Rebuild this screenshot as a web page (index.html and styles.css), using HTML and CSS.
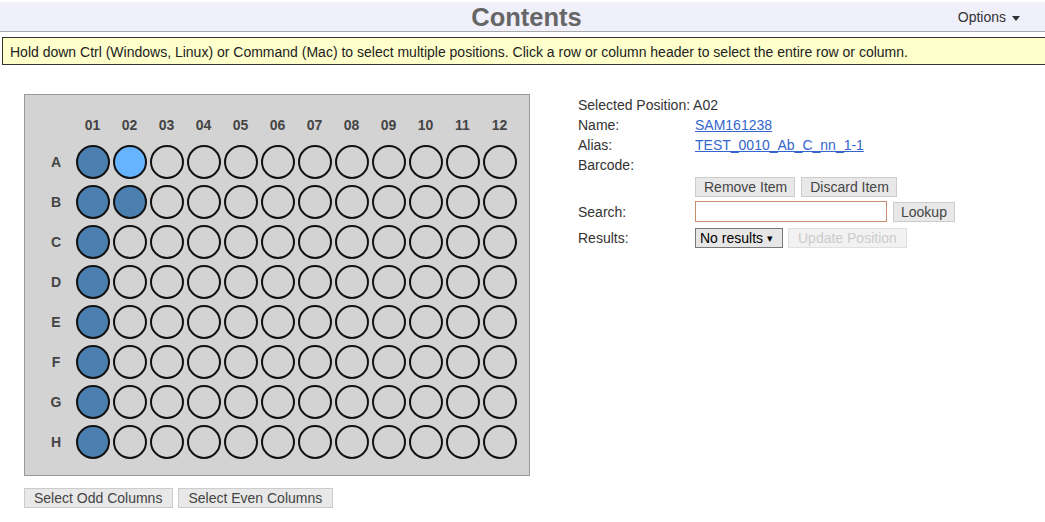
FILE: index.html
```html
<!DOCTYPE html>
<html>
<head>
<meta charset="utf-8">
<link rel="stylesheet" href="styles.css">
</head>
<body>
<div class="header">
  <h1 class="title">Contents</h1>
  <div class="options">Options <span class="caret"></span></div>
</div>
<div class="info">Hold down Ctrl (Windows, Linux) or Command (Mac) to select multiple positions. Click a row or column header to select the entire row or column.</div>
<div class="main">
  <div class="left">
    <div class="plate" id="plate"></div>
    <div class="plate-actions">
      <button class="btn btn-wide">Select Odd Columns</button>
      <button class="btn btn-wide">Select Even Columns</button>
    </div>
  </div>
  <div class="details">
    <div class="row"><span class="lbl lbl-auto">Selected Position:</span><span class="val">A02</span></div>
    <div class="row"><span class="lbl">Name:</span><a class="link" href="#">SAM161238</a></div>
    <div class="row"><span class="lbl">Alias:</span><a class="link" href="#">TEST_0010_Ab_C_nn_1-1</a></div>
    <div class="row"><span class="lbl">Barcode:</span></div>
    <div class="row btn-row"><span class="lbl"></span><button class="btn">Remove Item</button><button class="btn">Discard Item</button></div>
    <div class="row search-row"><span class="lbl">Search:</span><input class="search" type="text"><button class="btn">Lookup</button></div>
    <div class="row results-row"><span class="lbl">Results:</span><span class="select">No results <span class="sel-caret">&#9662;</span></span><button class="btn btn-disabled">Update Position</button></div>
  </div>
</div>
<script>
(function(){
  var plate = document.getElementById('plate');
  var rows = 'ABCDEFGH'.split('');
  var html = '<div class="corner"></div>';
  for (var c = 1; c <= 12; c++) html += '<div class="colhead">' + (c < 10 ? '0' + c : c) + '</div>';
  rows.forEach(function(r, ri){
    html += '<div class="rowhead">' + r + '</div>';
    for (var c = 1; c <= 12; c++) {
      var cls = 'well';
      if (c === 1 || (ri === 1 && c === 2)) cls += ' filled';
      if (ri === 0 && c === 2) cls += ' selected';
      html += '<div class="cell"><div class="' + cls + '"></div></div>';
    }
  });
  plate.innerHTML = html;
})();
</script>
</body>
</html>
```
FILE: styles.css
```css
html, body {
  margin: 0;
  padding: 0;
  background: #fff;
  font-family: "Liberation Sans", Arial, sans-serif;
  font-size: 14px;
  color: #333;
  overflow: hidden;
}
.header {
  margin-top: 2px;
  height: 29px;
  background: #f0f0fa;
  border-bottom: 1px solid #aaa;
  display: flex;
  align-items: center;
  justify-content: center;
  padding-left: 8px;
  position: relative;
}
.title {
  margin: 0;
  font-size: 25.5px;
  font-weight: bold;
  color: #666;
  line-height: 30px;
}
.options {
  position: absolute;
  right: 25px;
  top: 0;
  line-height: 31px;
  font-size: 14px;
  color: #333;
  display: flex;
  align-items: center;
}
.caret {
  display: inline-block;
  width: 0;
  height: 0;
  border-left: 4px solid transparent;
  border-right: 4px solid transparent;
  border-top: 5px solid #333;
  margin-left: 6px;
  margin-top: 1px;
}
.info {
  margin: 5px 0 0 2px;
  width: 1100px;
  height: 26px;
  line-height: 28px;
  border: 1px solid #333;
  background: #ffffcc;
  padding-left: 7px;
  color: #222;
  white-space: nowrap;
}
.main {
  display: flex;
  padding: 29px 0 0 24px;
  gap: 48px;
}
.plate {
  padding: 13px 11px 13px 13px;
  background: #d3d3d3;
  border: 1px solid #999;
  display: grid;
  width: max-content;
  grid-template-columns: 36px repeat(12, 37px);
  grid-template-rows: 34px repeat(8, 40px);
}
.colhead, .rowhead {
  display: flex;
  align-items: center;
  justify-content: center;
  font-weight: bold;
  font-size: 14px;
  color: #444;
}
.cell {
  display: flex;
  align-items: center;
  justify-content: center;
}
.well {
  width: 30px;
  height: 30px;
  border: 2px solid #111;
  border-radius: 50%;
  background: #d3d3d3;
}
.well.filled { background: #4a7fb0; }
.well.selected { background: #66b3ff; }
.plate-actions {
  display: flex;
  gap: 5px;
  margin-top: 12px;
}
.btn {
  font-family: "Liberation Sans", Arial, sans-serif;
  font-size: 14px;
  color: #444;
  background: #e8e8e8;
  border: 1px solid #ccc;
  border-radius: 0;
  height: 20px;
  padding: 0 7px;
  line-height: 18px;
  margin: 0;
}
.btn-wide { padding: 0 10px 0 9px; }
.btn-disabled {
  color: #ccc;
  background: #f2f2f2;
  border-color: #e0e0e0;
  padding: 0 9px;
}
.details {
  display: flex;
  flex-direction: column;
  padding-top: 1px;
}
.row {
  display: flex;
  align-items: center;
  height: 20px;
  white-space: nowrap;
}
.lbl {
  width: 117px;
  flex: none;
}
.lbl-auto { width: auto; margin-right: 3px; }
.link { color: #3366cc; text-decoration: underline; }
.btn-row { margin-top: 2px; gap: 6px; }
.btn-row .lbl { margin-right: -6px; }
.btn-row .btn { padding: 0 7px 0 8px; }
.search-row { margin-top: 4px; height: 21px; gap: 6px; }
.search-row .lbl { margin-right: -6px; }
.search {
  width: 192px;
  height: 21px;
  box-sizing: border-box;
  border: 1px solid #c98d6d;
  margin: 0;
  padding: 0;
}
.results-row { margin-top: 6px; gap: 5px; }
.results-row .lbl { margin-right: -5px; }
.select {
  display: inline-flex;
  align-items: center;
  box-sizing: border-box;
  height: 20px;
  width: 88px;
  padding-left: 4px;
  border: 1px solid #777;
  background: #e6e6e6;
  color: #000;
  font-size: 14px;
}
.sel-caret { font-size: 11px; margin-left: 4px; }
```
